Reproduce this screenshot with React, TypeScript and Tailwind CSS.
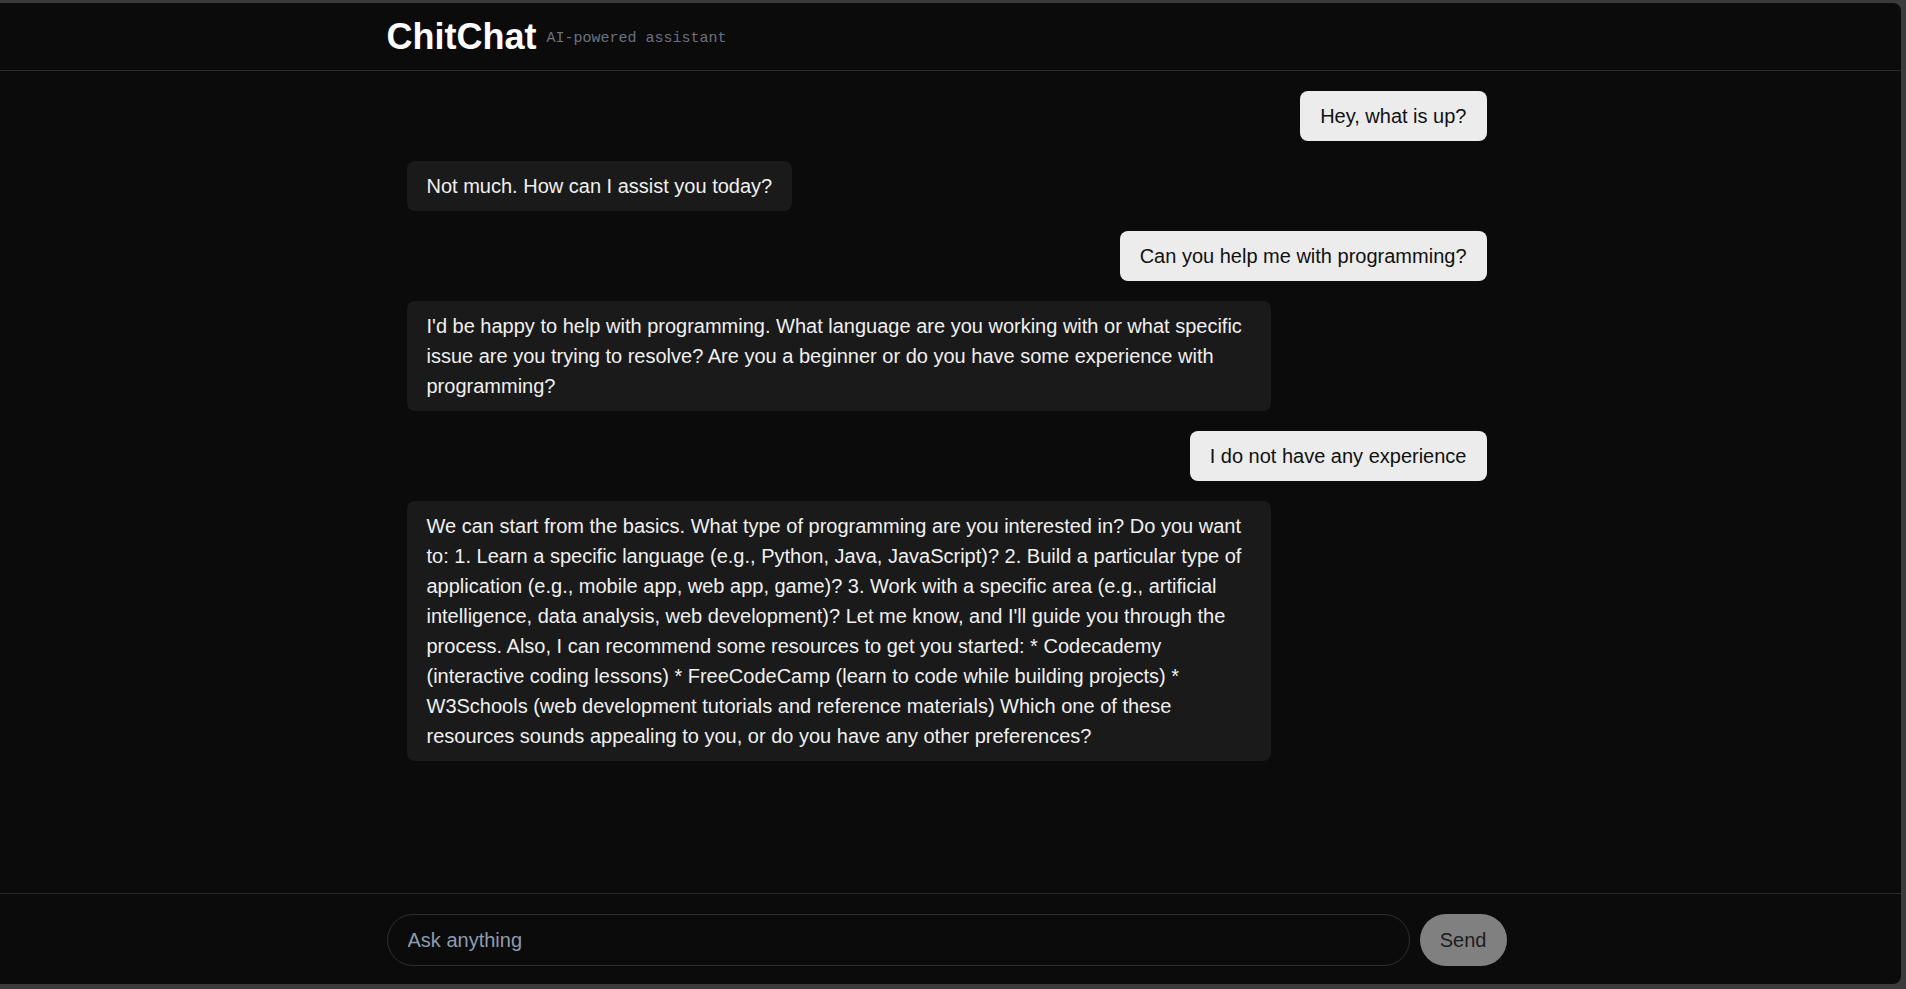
import React from "react";

type Msg = { role: "user" | "assistant"; text: string };

const messages: Msg[] = [
  { role: "user", text: "Hey, what is up?" },
  { role: "assistant", text: "Not much. How can I assist you today?" },
  { role: "user", text: "Can you help me with programming?" },
  {
    role: "assistant",
    text: "I'd be happy to help with programming. What language are you working with or what specific issue are you trying to resolve? Are you a beginner or do you have some experience with programming?",
  },
  { role: "user", text: "I do not have any experience" },
  {
    role: "assistant",
    text: "We can start from the basics. What type of programming are you interested in? Do you want to: 1. Learn a specific language (e.g., Python, Java, JavaScript)? 2. Build a particular type of application (e.g., mobile app, web app, game)? 3. Work with a specific area (e.g., artificial intelligence, data analysis, web development)? Let me know, and I'll guide you through the process. Also, I can recommend some resources to get you started: * Codecademy (interactive coding lessons) * FreeCodeCamp (learn to code while building projects) * W3Schools (web development tutorials and reference materials) Which one of these resources sounds appealing to you, or do you have any other preferences?",
  },
];

export default function App() {
  return (
    <div className="h-screen w-full bg-[#3b3b3b] pt-[3px] pr-[5px] pb-[5px] font-['Liberation_Sans',Arial,sans-serif]">
      <div className="flex h-full flex-col overflow-hidden rounded-r-lg bg-[#0b0b0b]">
        <header className="border-b border-[#2a2a2a] pr-2">
          <div className="mx-auto flex h-[67px] w-[1120px] items-center gap-2.5">
            <h1 className="text-[36px] font-bold leading-[40px] text-white">ChitChat</h1>
            <span className="pt-1 font-['Liberation_Mono',monospace] text-[15px] leading-[22px] text-[#6b7280]">
              AI-powered assistant
            </span>
          </div>
        </header>

        <main className="flex-1 overflow-y-auto pr-2">
          <div className="mx-auto flex w-[1120px] flex-col gap-5 px-5 py-5">
            {messages.map((m, i) =>
              m.role === "user" ? (
                <div
                  key={i}
                  className="max-w-[80%] self-end rounded-lg bg-[#ececec] px-5 py-2.5 text-[20px] leading-[30px] text-[#111111]"
                >
                  {m.text}
                </div>
              ) : (
                <div
                  key={i}
                  className="max-w-[80%] self-start rounded-lg bg-[#1a1a1a] px-5 py-2.5 text-[20px] leading-[30px] text-[#f0f0f0]"
                >
                  {m.text}
                </div>
              )
            )}
          </div>
        </main>

        <footer className="border-t border-[#2a2a2a] pt-5 pb-[18px] pr-2">
          <div className="mx-auto flex w-[1120px] gap-2.5">
            <input
              type="text"
              placeholder="Ask anything"
              className="h-[52px] flex-1 rounded-full border border-[#2e2e2e] bg-transparent px-5 text-[20px] text-white outline-none placeholder:text-[#8d9cb0]"
            />
            <button className="h-[52px] rounded-full bg-[#808080] px-5 text-[20px] text-[#1c1c1c]">
              Send
            </button>
          </div>
        </footer>
      </div>
    </div>
  );
}
